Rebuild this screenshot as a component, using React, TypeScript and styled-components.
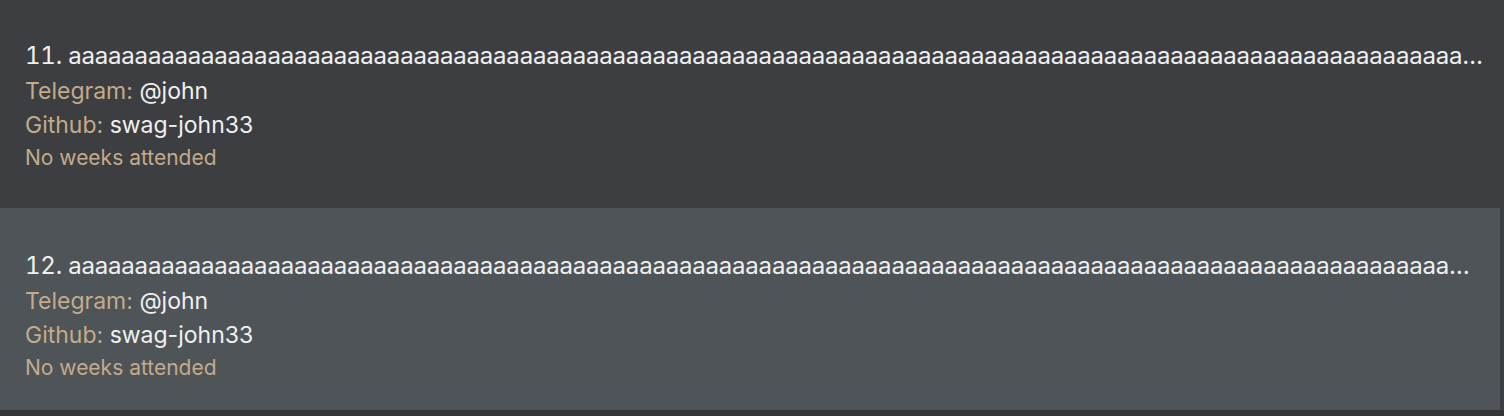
import React from "react";
import styled, { createGlobalStyle } from "styled-components";

const GlobalStyle = createGlobalStyle`
  html, body { margin: 0; padding: 0; background: #343537; }
  body { font-family: Inter, "Noto Sans", sans-serif; }
`;

const List = styled.div`
  width: 1504px;
  height: 416px;
  background: #3c3e41;
  display: flex;
  flex-direction: column;
  overflow: hidden;
`;

const Row = styled.div<{ $alt?: boolean }>`
  box-sizing: border-box;
  flex-shrink: 0;
  width: ${(p) => (p.$alt ? "1500px" : "1504px")};
  height: ${(p) => (p.$alt ? "202px" : "208px")};
  padding: ${(p) => (p.$alt ? "40px" : "38px")} ${(p) => (p.$alt ? "22px" : "15px")} 0 25px;
  background: ${(p) => (p.$alt ? "#4f5458" : "#3c3e41")};
  display: flex;
  flex-direction: column;
`;

const Bottom = styled.div`
  flex: 1;
  background: #343537;
`;

const Title = styled.div`
  color: #f0f0f0;
  font-size: 24px;
  line-height: 36px;
  letter-spacing: -0.2px;
  font-feature-settings: "tnum";
  white-space: nowrap;
  overflow: hidden;
  text-overflow: ellipsis;
`;

const Field = styled.div`
  font-size: 23px;
  line-height: 34px;
  color: #f0f0f0;
  white-space: nowrap;
`;

const Label = styled.span`
  color: #c3ab8b;
`;

const Note = styled.div`
  font-size: 21px;
  line-height: 32px;
  color: #c3ab8b;
`;

const title = "a".repeat(200);

const people = [
  { n: 11, tg: "@john", gh: "swag-john33" },
  { n: 12, tg: "@john", gh: "swag-john33" },
];

export default function App() {
  return (
    <>
      <GlobalStyle />
      <List>
        {people.map((p, i) => (
          <Row key={p.n} $alt={i % 2 === 1}>
            <Title>
              {p.n}. {title}
            </Title>
            <Field>
              <Label>Telegram:</Label> {p.tg}
            </Field>
            <Field>
              <Label>Github:</Label> {p.gh}
            </Field>
            <Note>No weeks attended</Note>
          </Row>
        ))}
        <Bottom />
      </List>
    </>
  );
}
